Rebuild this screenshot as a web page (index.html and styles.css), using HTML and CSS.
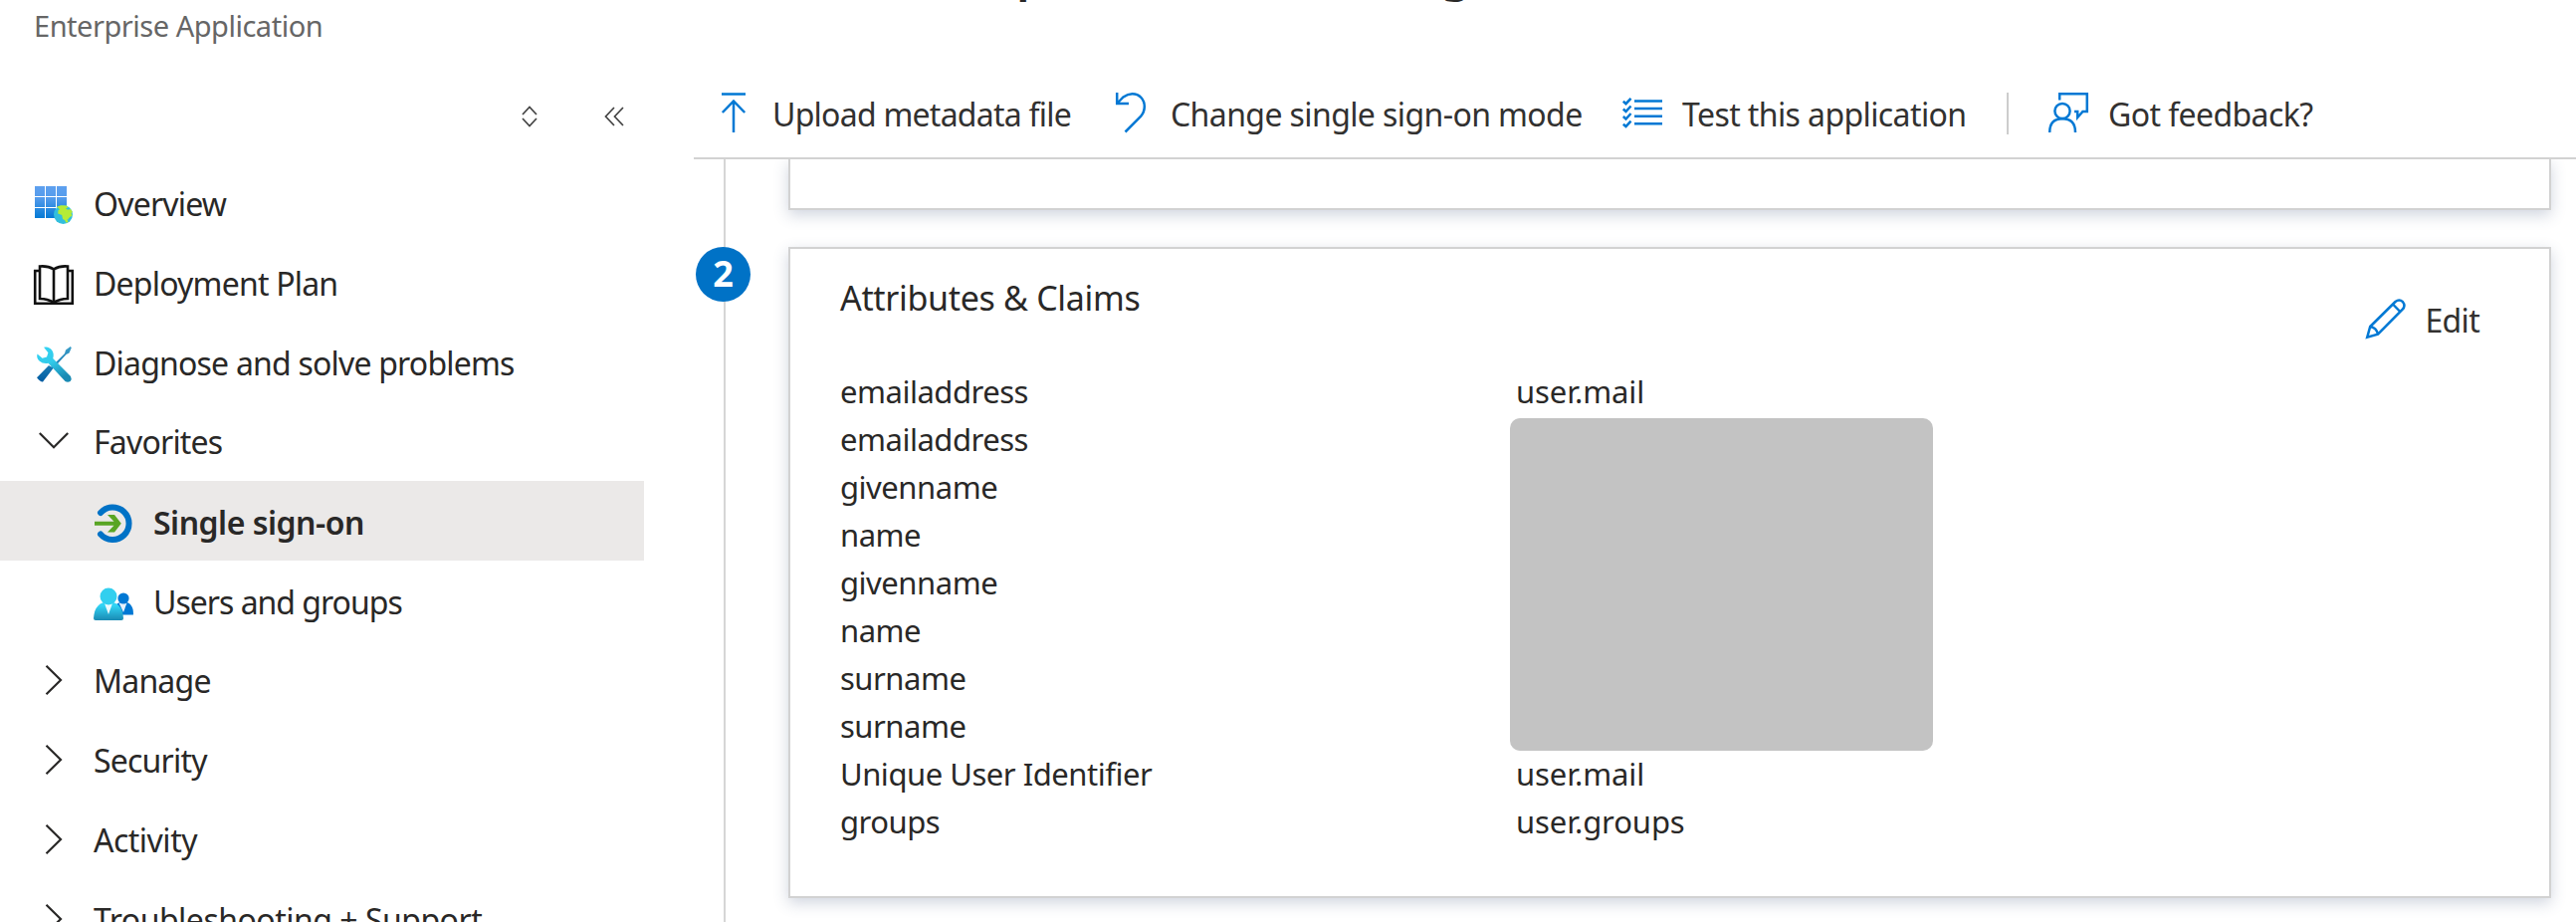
FILE: index.html
```
<!DOCTYPE html>
<html lang="en">
<head>
<meta charset="utf-8">
<title>Single sign-on</title>
<link rel="stylesheet" href="styles.css">
</head>
<body>
<div class="page">
  <aside class="sidebar">
    <div class="kind">Enterprise Application</div>
    <div class="sidebar-tools">
      <svg class="sort" viewBox="0 0 16 22" width="16" height="22"><path d="M1 9L8 1.500L15 9M1 13L8 20.500L15 13"/></svg>
      <svg class="collapse" viewBox="0 0 20 20" width="20" height="20"><path d="M10 1L1.500 10L10 19M19 1L10.500 10L19 19"/></svg>
    </div>
    <nav class="menu">
      <a class="item">
        <svg class="icon" viewBox="0 0 40 40" width="40" height="40">
          <defs>
            <linearGradient id="tiles" gradientUnits="userSpaceOnUse" x1="0" y1="1" x2="0" y2="34"><stop offset="0" stop-color="#5ea0ef"/><stop offset=".35" stop-color="#559cec"/><stop offset="1" stop-color="#0078d4"/></linearGradient>
          </defs>
          <path fill="url(#tiles)" d="M1 1h10v10H1zM12 1h10v10H12zM23 1h10v10H23zM1 12h10v10H1zM12 12h10v10H12zM23 12h10v10H23zM1 23h10v10H1zM12 23h10v10H12zM23 23h10v10H23z"/>
          <circle cx="29.500" cy="29.500" r="9.500" fill="#32bedd"/>
          <path fill="#b4ec36" d="M23 21.800l4-1.600l6 .3l1.500 1.800l-2.500 1l2 1.500l3-.8l1.800 3l-1.300 1l1 2.500l-3.500 2.500l-.5 1.500l-1-.5l1 3l-2 .8l-1.500-2.800l-2-1l-.8-4l-4-1.500l.3-3.200l1.500-1z"/>
        </svg>
        <span>Overview</span>
      </a>
      <a class="item">
        <svg class="icon book" viewBox="0 0 40 40" width="40" height="40"><path d="M6 6H1.200V38.800H38.800V6H34"/><path d="M6 1.500Q14 .8 20 4.300Q26 .8 34 1.500V34Q26 34 20 38Q14 34 6 34ZM20 4.300V38"/></svg>
        <span>Deployment Plan</span>
      </a>
      <a class="item">
        <svg class="icon" viewBox="0 0 40 40" width="40" height="40">
          <defs>
            <linearGradient id="wrench" x1="0" y1="0" x2=".5" y2="1"><stop offset="0" stop-color="#32d4f5"/><stop offset=".5" stop-color="#32cbea"/><stop offset="1" stop-color="#198ab3"/></linearGradient>
            <linearGradient id="driver" x1="0" y1="0" x2="0" y2="1"><stop offset="0" stop-color="#3a9fc9"/><stop offset="1" stop-color="#005ba1"/></linearGradient>
          </defs>
          <path fill="url(#driver)" d="M36.800 2L37.800 3.200L35.500 8.500L32.500 10L19 24.500L9 37.500Q7 38 3 33.200L15 21L17.500 22.500L31 9L32 5.500Z"/>
          <path fill="url(#wrench)" d="M10 2.800Q15 1.500 18.500 6.200Q20.500 9.500 19.200 14L37 32Q38.500 34.500 36.600 37Q34 38.500 31.500 37L14.500 18.800Q9.500 20 5.500 16.500Q2.300 13.500 3.500 9.500L8.500 13.800L13 12.500L14.400 8.200Z"/>
        </svg>
        <span>Diagnose and solve problems</span>
      </a>
      <a class="item up">
        <svg class="icon chevron" viewBox="0 0 40 40" width="40" height="40"><path d="M5.800 12L20 26.300L34.200 12"/></svg>
        <span>Favorites</span>
      </a>
      <a class="item nested selected">
        <svg class="icon" viewBox="0 0 40 40" width="40" height="40">
          <path fill="none" stroke="#0072c6" stroke-width="6" stroke-linecap="round" d="M7 9A16.300 16.300 0 1 1 7 30.500"/>
          <path fill="#59a523" d="M1 17.800H20.500L14 11H21L27.800 19.700L21 28.500H14L20.500 21.700H1Z"/>
        </svg>
        <span>Single sign-on</span>
      </a>
      <a class="item nested users">
        <svg class="icon" viewBox="0 0 40 40" width="40" height="40">
          <defs><linearGradient id="user" x1="0" y1="0" x2="0" y2="1"><stop offset=".2" stop-color="#32d4f5"/><stop offset="1" stop-color="#198ab3"/></linearGradient></defs>
          <path fill="#0078d4" d="M40 31Q40 18.500 30 18.500Q20 18.500 20 31Q20 31.500 21 31.500H39Q40 31.500 40 31Z"/>
          <path fill="#fff" opacity=".9" d="M25.500 19.500L30 29L33.500 19.500Z"/>
          <circle cx="30" cy="15" r="5.600" fill="#0078d4"/>
          <path fill="url(#user)" d="M0 35Q1 18.500 15 18.500Q29 18.500 30 35Q30 37 28 37H2Q0 37 0 35Z"/>
          <path fill="#fff" opacity=".9" d="M11 20L15 31L19 20Z"/>
          <circle cx="15" cy="13" r="8.500" fill="#32cfef"/>
        </svg>
        <span>Users and groups</span>
      </a>
      <a class="item up">
        <svg class="icon chevron" viewBox="0 0 40 40" width="40" height="40"><path d="M12.500 5.800L27 20L12.500 34.200"/></svg>
        <span>Manage</span>
      </a>
      <a class="item up">
        <svg class="icon chevron" viewBox="0 0 40 40" width="40" height="40"><path d="M12.500 5.800L27 20L12.500 34.200"/></svg>
        <span>Security</span>
      </a>
      <a class="item up loose">
        <svg class="icon chevron" viewBox="0 0 40 40" width="40" height="40"><path d="M12.500 5.800L27 20L12.500 34.200"/></svg>
        <span>Activity</span>
      </a>
      <a class="item up loose">
        <svg class="icon chevron" viewBox="0 0 40 40" width="40" height="40"><path d="M12.500 5.800L27 20L12.500 34.200"/></svg>
        <span>Troubleshooting + Support</span>
      </a>
    </nav>
  </aside>

  <main class="main">
    <div class="heading"><span>p</span><span>g</span></div>
    <div class="toolbar">
      <a class="command upload">
        <svg viewBox="0 0 24 40" width="24" height="40"><path d="M0 1.500H24M12 40V8.500M.8 20L12 8.500L23.200 20"/></svg>
        <span>Upload metadata file</span>
      </a>
      <a class="command change">
        <svg viewBox="0 0 30 40" width="30" height="40"><path d="M1.200 0V11H13M1.200 11L7.500 4.500Q12 1.200 16.500 1.200C24 1.200 28.800 7 28.800 14Q28.800 19.500 25 24L9.500 39.500"/></svg>
        <span>Change single sign-on mode</span>
      </a>
      <a class="command test">
        <svg viewBox="0 0 40 40" width="40" height="40"><path d="M12 8.500H40M12 16H40M12 23.700H40M12 31.200H40M.8 8.800L3.500 11.200L8.500 5.800M.8 16.500L3.500 19L8.500 13.500M.8 24L3.500 26.500L8.500 21M.8 31.700L3.500 34L8.500 28.700"/></svg>
        <span>Test this application</span>
      </a>
      <span class="divider"></span>
      <a class="command feedback">
        <svg viewBox="0 0 40 40" width="40" height="40"><circle cx="14" cy="18.500" r="7.600"/><path d="M1.200 40Q1.200 26.300 14 26.300Q27 26.300 27 40M11.200 7.500V1.200H38.800V19H34.500L29.200 25V19H26"/></svg>
        <span>Got feedback?</span>
      </a>
    </div>
    <div class="content">
      <div class="rail"><span class="step">2</span></div>
      <div class="cards">
        <section class="card previous"></section>
        <section class="card claims">
          <div class="card-head">
            <h2>Attributes &amp; Claims</h2>
            <a class="edit">
              <svg viewBox="0 0 40 40" width="40" height="40"><path d="M1.200 38.800L4.200 28L29.500 3Q33.500-.2 37 3.200Q40.200 7 36.500 11L12 35.700ZM4.200 28Q10.500 29 12 35.700M27 5.500L34.300 13"/></svg>
              <span>Edit</span>
            </a>
          </div>
          <div class="table">
            <dl class="names">
              <dt>emailaddress</dt><dt>emailaddress</dt><dt>givenname</dt><dt>name</dt><dt>givenname</dt><dt>name</dt><dt>surname</dt><dt>surname</dt><dt>Unique User Identifier</dt><dt>groups</dt>
            </dl>
            <div class="values">
              <div>user.mail</div>
              <div class="redacted"></div>
              <div>user.mail</div>
              <div>user.groups</div>
            </div>
          </div>
        </section>
      </div>
    </div>
  </main>
</div>
</body>
</html>
```
FILE: styles.css
```
* { box-sizing: border-box; }
body {
  margin: 0;
  background: #fff;
  color: #292827;
  font: 32px/48px "Noto Sans", "Open Sans", sans-serif;
}
.page { display: flex; width: 2588px; height: 926px; overflow: hidden; }
svg { display: block; flex: none; overflow: visible; }

/* Sidebar */
.sidebar { width: 697px; flex: none; }
.kind {
  height: 50px;
  padding-left: 34px;
  color: #666;
  font-size: 29px;
  line-height: 51px;
  letter-spacing: -.48px;
}
.sidebar-tools {
  display: flex;
  align-items: center;
  gap: 67px;
  height: 113px;
  padding: 20px 0 0 524px;
}
.sort, .collapse { fill: none; stroke: #444; stroke-width: 1.7; }
.item {
  display: flex;
  align-items: center;
  gap: 20px;
  width: 647px;
  height: 80px;
  padding-left: 34px;
  letter-spacing: -.8px;
  white-space: nowrap;
}
.item span { padding-top: 4px; }
.item .icon { margin-top: 5px; }
.item.up span { padding-top: 2px; }
.item.up .icon { margin-top: 0; }
.nested { padding-left: 94px; }
.users { letter-spacing: -1px; }
.loose { letter-spacing: -.5px; }
.selected { background: #ebe9e8; font-weight: 600; letter-spacing: -.5px; }
.chevron { fill: none; stroke: #292827; stroke-width: 2.2; }
.book { fill: none; stroke: #111; stroke-width: 2.6; }

/* Main pane */
.main { flex: 1; min-width: 0; display: flex; flex-direction: column; }
.heading {
  display: flex;
  gap: 397px;
  height: 4px;
  padding-left: 324px;
  overflow: hidden;
  font-size: 48px;
  font-weight: 600;
}
.heading span { margin-top: -52px; }
.toolbar {
  display: flex;
  align-items: flex-start;
  height: 156px;
  padding: 86px 0 0 28px;
  border-bottom: 2px solid #d2d2d2;
  color: #323130;
  letter-spacing: -.6px;
  white-space: nowrap;
}
.command { display: flex; align-items: flex-start; }
.command span { padding-top: 1px; }
.toolbar svg, .edit svg { fill: none; stroke: #0078d4; stroke-width: 2.5; }
.toolbar svg { margin-top: 3px; }
.upload { width: 396px; gap: 27px; letter-spacing: -.75px; }
.change { width: 509px; gap: 25px; }
.test { width: 386px; gap: 20px; }
.divider { width: 2px; height: 42px; margin: 3px 40px 0 0; background: #cdcdcd; }
.feedback { gap: 20px; }

/* Numbered steps */
.content { display: flex; flex: 1; min-height: 0; overflow: hidden; }
.rail {
  width: 65px;
  padding: 88px 0 0 2px;
  flex: none;
  background: linear-gradient(#d6d6d6, #d6d6d6) 30px 0 / 2px 100% no-repeat;
}
.step {
  display: block;
  width: 55px;
  height: 55px;
  border-radius: 50%;
  background: #0072c6;
  color: #fff;
  font-size: 36px;
  font-weight: 700;
  line-height: 54px;
  text-align: center;
}
.cards { display: flex; flex-direction: column; gap: 37px; padding-left: 30px; }
.card {
  width: 1771px;
  border: 2px solid #d2d2d2;
  background: #fff;
  box-shadow: 0 5px 14px rgba(60, 80, 120, .24);
}
.previous { height: 51px; border-top: 0; }
.claims { height: 654px; padding-left: 50px; }
.card-head { display: flex; justify-content: space-between; height: 119px; padding: 25px 70px 0 0; }
h2 { margin: 0; font-size: 34px; font-weight: 400; letter-spacing: -.32px; }
.edit { display: flex; gap: 20px; padding-top: 23px; color: #323130; letter-spacing: -.7px; }
.edit svg { margin-top: 2px; }
.table { display: flex; font-size: 31px; letter-spacing: -.48px; }
.names { width: 673px; margin: 0; }
.values > div { padding-left: 6px; letter-spacing: -.1px; }
.values > .redacted {
  width: 425px;
  height: 334px;
  margin: 3px 0 -1px;
  border-radius: 10px;
  background: #c3c3c3;
}
```
